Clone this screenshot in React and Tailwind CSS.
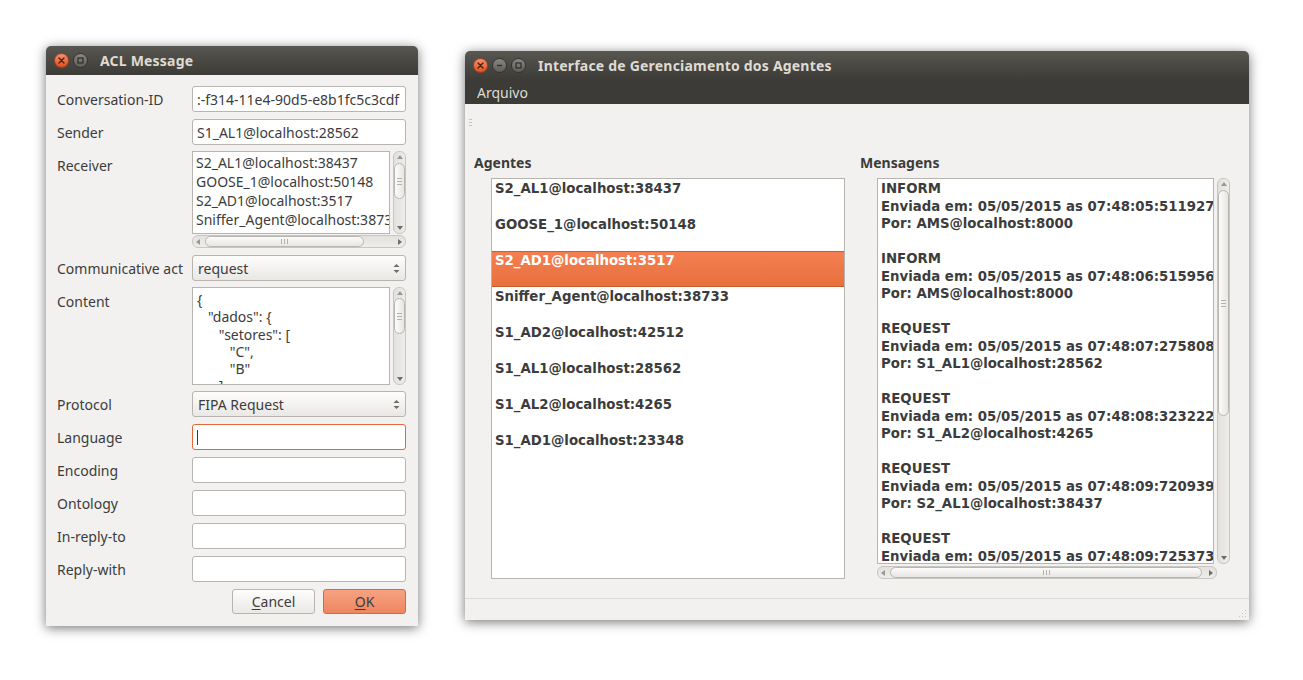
import React from "react";

const ui = { fontFamily: '"Noto Sans", "Open Sans", sans-serif' };
const mono = { fontFamily: '"DejaVu Sans", "Noto Sans", sans-serif' };

// -------------------------
// WINDOW CHROME
// -------------------------
function CircleBtn({ kind }) {
  if (kind === "close") {
    return (
      <div className="w-[15px] h-[15px] rounded-full bg-gradient-to-b from-[#f6916b] to-[#df4f1c] border border-[#a8401a] flex items-center justify-center">
        <svg width="7" height="7" viewBox="0 0 7 7">
          <path d="M1 1L6 6M6 1L1 6" stroke="#4a2010" strokeWidth="1.4" strokeLinecap="round" />
        </svg>
      </div>
    );
  }
  return (
    <div className="w-[15px] h-[15px] rounded-full bg-gradient-to-b from-[#8a8882] to-[#5f5d58] border border-[#34332f] flex items-center justify-center">
      {kind === "min" ? (
        <svg width="7" height="7" viewBox="0 0 7 7">
          <path d="M1 3.5H6" stroke="#2f2e2b" strokeWidth="1.4" />
        </svg>
      ) : (
        <svg width="7" height="7" viewBox="0 0 7 7">
          <rect x="1" y="1" width="5" height="5" fill="none" stroke="#2f2e2b" strokeWidth="1.2" />
        </svg>
      )}
    </div>
  );
}

function TitleBar({ title, buttons }) {
  return (
    <div className="h-[29px] flex items-center px-2 gap-[4px] bg-gradient-to-b from-[#595751] to-[#3c3b37] rounded-t-[5px]">
      {buttons.map((b) => (
        <CircleBtn key={b} kind={b} />
      ))}
      <span className="ml-[8px] text-[14px] font-bold tracking-[0.2px] text-[#dfdbd2]" style={ui}>
        {title}
      </span>
    </div>
  );
}

// -------------------------
// SCROLLBARS
// -------------------------
function ArrowUp() {
  return (
    <svg width="6" height="4" viewBox="0 0 6 4">
      <path d="M0 4L3 0L6 4Z" fill="#9a9893" />
    </svg>
  );
}
function ArrowDown() {
  return (
    <svg width="6" height="4" viewBox="0 0 6 4">
      <path d="M0 0L3 4L6 0Z" fill="#6f6d68" />
    </svg>
  );
}

function VScroll({ before, thumb }) {
  return (
    <div className="w-[13px] h-full rounded-[6px] border border-[#c9c6c1] bg-gradient-to-r from-[#e3e1dd] to-[#eeedeb] flex flex-col items-center">
      <div className="h-[10px] flex items-center">
        <ArrowUp />
      </div>
      <div style={{ height: before }} />
      <div
        className="w-[11px] rounded-[6px] border border-[#b9b6b1] bg-gradient-to-r from-[#fbfbfa] to-[#e8e6e3] flex flex-col items-center justify-center gap-[2px]"
        style={{ height: thumb }}
      >
        <div className="w-[5px] h-px bg-[#b5b2ad]" />
        <div className="w-[5px] h-px bg-[#b5b2ad]" />
        <div className="w-[5px] h-px bg-[#b5b2ad]" />
      </div>
      <div className="flex-1" />
      <div className="h-[10px] flex items-center">
        <ArrowDown />
      </div>
    </div>
  );
}

function HScroll({ before, thumb }) {
  return (
    <div className="h-[13px] w-full rounded-[6px] border border-[#c9c6c1] bg-gradient-to-b from-[#e3e1dd] to-[#eeedeb] flex items-center">
      <div className="w-[10px] flex justify-center">
        <svg width="4" height="6" viewBox="0 0 4 6">
          <path d="M4 0L0 3L4 6Z" fill="#9a9893" />
        </svg>
      </div>
      <div style={{ width: before }} />
      <div
        className="h-[11px] rounded-[6px] border border-[#b9b6b1] bg-gradient-to-b from-[#fbfbfa] to-[#e8e6e3] flex items-center justify-center gap-[2px]"
        style={{ width: thumb }}
      >
        <div className="w-px h-[5px] bg-[#b5b2ad]" />
        <div className="w-px h-[5px] bg-[#b5b2ad]" />
        <div className="w-px h-[5px] bg-[#b5b2ad]" />
      </div>
      <div className="flex-1" />
      <div className="w-[10px] flex justify-center">
        <svg width="4" height="6" viewBox="0 0 4 6">
          <path d="M0 0L4 3L0 6Z" fill="#6f6d68" />
        </svg>
      </div>
    </div>
  );
}

// -------------------------
// FORM WIDGETS
// -------------------------
function Field({ value, focused }) {
  return (
    <div
      className={`h-[26px] rounded-[3px] bg-white flex items-center px-[4px] overflow-hidden whitespace-nowrap text-[14px] text-[#3c3c3c] ${
        focused ? "border border-[#e2683b]" : "border border-[#b8b5b0]"
      }`}
    >
      {focused ? <div className="w-px h-[15px] bg-[#3c3c3c]" /> : value}
    </div>
  );
}

function Combo({ value }) {
  return (
    <div className="h-[26px] rounded-[3px] border border-[#b8b5b0] bg-gradient-to-b from-[#fdfdfc] to-[#eae8e5] flex items-center justify-between pl-[5px] pr-[5px] text-[14px] text-[#3c3c3c]">
      <span>{value}</span>
      <svg width="7" height="11" viewBox="0 0 7 11">
        <path d="M0.5 4L3.5 1L6.5 4Z" fill="#6f6d68" />
        <path d="M0.5 7L3.5 10L6.5 7Z" fill="#6f6d68" />
      </svg>
    </div>
  );
}

function Row({ label, children, top = false }) {
  return (
    <div className={`flex ${top ? "items-start" : "items-center"}`}>
      <div className={`w-[135px] text-[14px] text-[#3c3c3c] ${top ? "pt-[4px]" : ""}`}>{label}</div>
      <div className="w-[214px]">{children}</div>
    </div>
  );
}

function AclMessage() {
  const receivers = [
    "S2_AL1@localhost:38437",
    "GOOSE_1@localhost:50148",
    "S2_AD1@localhost:3517",
    "Sniffer_Agent@localhost:38733",
  ];
  const content = ['{', '   "dados": {', '      "setores": [', '         "C",', '         "B"', '      ]'];

  return (
    <div
      className="absolute left-[46px] top-[46px] w-[372px] h-[580px] rounded-t-[5px] bg-[#f2f1f0] shadow-[0_2px_12px_rgba(0,0,0,0.55)] flex flex-col"
      style={ui}
    >
      <TitleBar title="ACL Message" buttons={["close", "max"]} />
      <div className="flex flex-col pl-[11px] pt-[11px]">
        <Row label="Conversation-ID">
          <Field value=":-f314-11e4-90d5-e8b1fc5c3cdf" />
        </Row>
        <div className="h-[7px]" />
        <Row label="Sender">
          <Field value="S1_AL1@localhost:28562" />
        </Row>
        <div className="h-[6px]" />
        <Row label="Receiver" top>
          <div className="flex flex-col gap-[1px]">
            <div className="flex gap-[3px] h-[83px]">
              <div className="flex-1 border border-[#b8b5b0] bg-white pl-[3px] pt-[1px] overflow-hidden whitespace-nowrap text-[14px] leading-[19px] text-[#3c3c3c]">
                {receivers.map((r) => (
                  <div key={r}>{r}</div>
                ))}
              </div>
              <VScroll before={1} thumb={36} />
            </div>
            <HScroll before={2} thumb={159} />
          </div>
        </Row>
        <div className="h-[7px]" />
        <Row label="Communicative act">
          <Combo value="request" />
        </Row>
        <div className="h-[6px]" />
        <Row label="Content" top>
          <div className="flex gap-[3px] h-[98px]">
            <div className="flex-1 border border-[#b8b5b0] bg-white pl-[4px] pt-[3px] overflow-hidden whitespace-pre text-[14px] leading-[17.3px] text-[#3c3c3c]">
              {content.map((c, i) => (
                <div key={i}>{c}</div>
              ))}
            </div>
            <VScroll before={0} thumb={36} />
          </div>
        </Row>
        <div className="h-[6px]" />
        <Row label="Protocol">
          <Combo value="FIPA Request" />
        </Row>
        <div className="h-[7px]" />
        <Row label="Language">
          <Field focused />
        </Row>
        <div className="h-[7px]" />
        <Row label="Encoding">
          <Field value="" />
        </Row>
        <div className="h-[7px]" />
        <Row label="Ontology">
          <Field value="" />
        </Row>
        <div className="h-[7px]" />
        <Row label="In-reply-to">
          <Field value="" />
        </Row>
        <div className="h-[7px]" />
        <Row label="Reply-with">
          <Field value="" />
        </Row>
        <div className="flex justify-end gap-[8px] pr-[12px] mt-[7px]">
          <button className="w-[83px] h-[25px] rounded-[3px] border border-[#b8b5b0] bg-gradient-to-b from-[#fdfdfc] to-[#ebe9e6] text-[14px] text-[#3c3c3c]">
            <span className="underline underline-offset-2">C</span>ancel
          </button>
          <button className="w-[83px] h-[25px] rounded-[3px] border border-[#d46a43] bg-gradient-to-b from-[#f7a282] to-[#ee8660] text-[14px] text-[#3c3c3c]">
            <span className="underline underline-offset-2">O</span>K
          </button>
        </div>
      </div>
    </div>
  );
}

// -------------------------
// MANAGER WINDOW
// -------------------------
function Manager() {
  const agents = [
    "S2_AL1@localhost:38437",
    "GOOSE_1@localhost:50148",
    "S2_AD1@localhost:3517",
    "Sniffer_Agent@localhost:38733",
    "S1_AD2@localhost:42512",
    "S1_AL1@localhost:28562",
    "S1_AL2@localhost:4265",
    "S1_AD1@localhost:23348",
  ];
  const messages = [
    ["INFORM", "07:48:05:511927", "AMS@localhost:8000"],
    ["INFORM", "07:48:06:515956", "AMS@localhost:8000"],
    ["REQUEST", "07:48:07:275808", "S1_AL1@localhost:28562"],
    ["REQUEST", "07:48:08:323222", "S1_AL2@localhost:4265"],
    ["REQUEST", "07:48:09:720939", "S2_AL1@localhost:38437"],
    ["REQUEST", "07:48:09:725373", "S2_AD1@localhost:3517"],
  ];

  return (
    <div
      className="absolute left-[465px] top-[51px] w-[784px] h-[569px] rounded-t-[5px] bg-[#f2f1f0] shadow-[0_2px_12px_rgba(0,0,0,0.55)] flex flex-col"
      style={ui}
    >
      <TitleBar title="Interface de Gerenciamento dos Agentes" buttons={["close", "min", "max"]} />
      <div className="h-[24px] bg-[#3c3b37] flex items-center pl-[12px] text-[14px] text-[#dfdbd2]">
        Arquivo
      </div>
      <div className="h-[49px] pl-[4px] pt-[15px]">
        <div className="flex flex-col gap-[2px] w-[3px]">
          <div className="h-px bg-[#c6c3be]" />
          <div className="h-px bg-[#c6c3be]" />
          <div className="h-px bg-[#c6c3be]" />
        </div>
      </div>
      <div className="flex pl-[9px] gap-[15px]">
        <div className="w-[371px] flex flex-col">
          <div className="text-[14px] font-bold text-[#3c3c3c] h-[19px] leading-[19px]">Agentes</div>
          <div className="ml-[17px] mt-[6px] h-[401px] border border-[#b8b5b0] bg-white overflow-hidden" style={mono}>
            {agents.map((a, i) => (
              <div
                key={a}
                className={`h-[36px] pl-[3px] text-[13.3px] font-bold leading-[17px] whitespace-nowrap ${
                  i === 2
                    ? "bg-gradient-to-b from-[#f47f52] to-[#e8703e] text-white border-y border-[#c95d30]"
                    : "text-[#3c3c3c] pt-px"
                }`}
              >
                {a}
              </div>
            ))}
          </div>
        </div>
        <div className="w-[370px] flex flex-col">
          <div className="text-[14px] font-bold text-[#3c3c3c] h-[19px] leading-[19px]">Mensagens</div>
          <div className="ml-[17px] mt-[6px] flex flex-col gap-[2px]">
            <div className="flex gap-[3px] h-[386px]">
              <div
                className="w-[337px] border border-[#b8b5b0] bg-white overflow-hidden pl-[3px] pt-[1px] whitespace-nowrap text-[13.3px] font-bold leading-[17.5px] text-[#3c3c3c]"
                style={mono}
              >
                {messages.map((m, i) => (
                  <div key={i} className="mb-[17.5px]">
                    <div>{m[0]}</div>
                    <div>Enviada em: 05/05/2015 as {m[1]}</div>
                    <div>Por: {m[2]}</div>
                  </div>
                ))}
              </div>
              <VScroll before={1} thumb={226} />
            </div>
            <div className="w-[340px]">
              <HScroll before={2} thumb={312} />
            </div>
          </div>
        </div>
      </div>
      <div className="flex-1" />
      <div className="h-[22px] border-t border-[#dcdad5] flex justify-end items-end pr-[2px] pb-[2px]">
        <svg width="10" height="10" viewBox="0 0 10 10">
          {[[8, 2], [8, 5], [8, 8], [5, 5], [5, 8], [2, 8]].map(([x, y]) => (
            <rect key={`${x}-${y}`} x={x} y={y} width="1" height="1" fill="#c6c3be" />
          ))}
        </svg>
      </div>
    </div>
  );
}

export default function App() {
  return (
    <div className="relative w-[1303px] h-[680px] bg-white overflow-hidden">
      <AclMessage />
      <Manager />
    </div>
  );
}
